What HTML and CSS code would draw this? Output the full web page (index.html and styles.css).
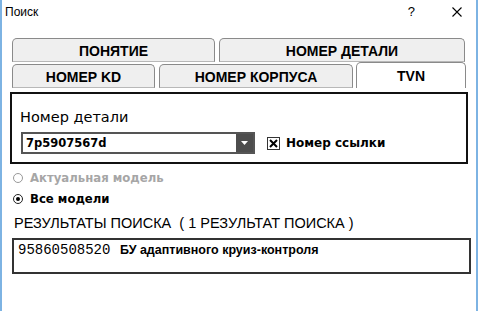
FILE: index.html
```html
<!DOCTYPE html>
<html lang="ru">
<head>
    <meta charset="UTF-8">
    <title>Поиск</title>
    <link rel="stylesheet" href="styles.css">
</head>
<body>
    <div class="window">
        <div class="titlebar">
            <span class="title">Поиск</span>
            <span class="help">?</span>
            <span class="close">
                <svg width="10" height="10" viewBox="0 0 10 10"><path d="M0.5 0.5 L9.5 9.5 M9.5 0.5 L0.5 9.5" stroke="#000" stroke-width="1.1"/></svg>
            </span>
        </div>

        <div class="content">
            <div class="tabs">
                <div class="tab-row">
                    <div class="tab t-concept">ПОНЯТИЕ</div>
                    <div class="tab t-part">НОМЕР ДЕТАЛИ</div>
                </div>
                <div class="tab-row">
                    <div class="tab t-kd">НОМЕР KD</div>
                    <div class="tab t-body">НОМЕР КОРПУСА</div>
                    <div class="tab t-tvn active">TVN</div>
                </div>
            </div>

            <div class="panel">
                <div class="label">Номер детали</div>
                <div class="field-row">
                    <div class="combo">
                        <span class="combo-value">7p5907567d</span>
                        <span class="combo-btn">
                            <svg width="7" height="4" viewBox="0 0 7 4"><path d="M0 0 H7 L3.5 4 Z" fill="#fff"/></svg>
                        </span>
                    </div>
                    <label class="check">
                        <span class="box">
                            <svg width="9" height="9" viewBox="0 0 9 9"><path d="M1 1 L8 8 M8 1 L1 8" stroke="#000" stroke-width="2"/></svg>
                        </span>
                        Номер ссылки
                    </label>
                </div>
            </div>

            <div class="radio disabled"><span class="dot"></span>Актуальная модель</div>
            <div class="radio"><span class="dot on"></span>Все модели</div>

            <div class="results-title">РЕЗУЛЬТАТЫ ПОИСКА&nbsp; ( 1 РЕЗУЛЬТАТ ПОИСКА )</div>
            <div class="results">
                <div class="result-line">
                    <span class="code">95860508520</span>
                    <span class="name">БУ адаптивного круиз-контроля</span>
                </div>
            </div>
        </div>
    </div>
</body>
</html>
```

FILE: styles.css
```css
body {
    margin: 0;
    background: #fff;
    font-family: "DejaVu Sans", Verdana, sans-serif;
    color: #000;
}

.window {
    width: 474px;
    height: 311px;
    border-left: 2px solid #7db3e3;
    border-right: 2px solid #7db3e3;
    background: #fff;
}

/* barra de titulo */
.titlebar {
    height: 30px;
    display: flex;
    align-items: center;
    padding-left: 3px;
    font-family: "Liberation Sans", Arial, sans-serif;
    font-size: 12px;
}

.title {
    flex: 1;
    margin-top: -7px;
}

.help {
    margin-top: -7px;
    margin-right: 37px;
    font-size: 13px;
}

.close {
    display: flex;
    margin-top: -7px;
    margin-right: 14px;
}

.content {
    padding: 8px 0 0 8px;
}

/* abas */
.tabs {
    display: flex;
    flex-direction: column;
    gap: 2px;
    padding-left: 2px;
}

.tab-row {
    display: flex;
    gap: 4px;
}

.tab {
    height: 24px;
    box-sizing: border-box;
    border: 1px solid #8a8a8a;
    border-bottom: 1px solid #b8b8b8;
    border-radius: 5px 5px 0 0;
    background: #efefef;
    font-family: "Liberation Sans", Arial, sans-serif;
    font-weight: bold;
    font-size: 14px;
    display: flex;
    justify-content: center;
    align-items: center;
    padding-top: 2px;
}

.t-concept { width: 203px; }
.t-part { width: 246px; }
.t-kd { width: 143px; }
.t-body { width: 194px; }
.t-tvn { width: 110px; margin-left: -1px; }

.tab.active {
    background: #fff;
    height: 26px;
    margin-top: -2px;
    border-bottom: none;
    align-items: flex-start;
    padding-top: 5px;
}

/* painel */
.panel {
    height: 68px;
    border: 2px solid #111;
    margin-top: 4px;
    padding: 0 0 0 8px;
    width: 446px;
}

.label {
    font-size: 14.5px;
    margin-top: 15px;
    height: 22px;
}

.field-row {
    display: flex;
    align-items: center;
    margin-top: 1px;
}

.combo {
    width: 230px;
    height: 18px;
    border: 2px solid #555;
    display: flex;
    align-items: center;
    justify-content: space-between;
    margin-left: 1px;
}

.combo-value {
    font-weight: bold;
    font-size: 11.5px;
    padding-left: 3px;
}

.combo-btn {
    width: 17px;
    height: 18px;
    background: #4d4d4d;
    display: flex;
    align-items: center;
    justify-content: center;
}

.check {
    display: flex;
    align-items: center;
    margin-left: 12px;
    font-weight: bold;
    font-size: 12px;
}

.box {
    width: 11px;
    height: 11px;
    border: 1px solid #333;
    display: flex;
    align-items: center;
    justify-content: center;
    margin-right: 6px;
}

/* opcoes */
.radio {
    display: flex;
    align-items: center;
    font-weight: bold;
    font-size: 11.7px;
    margin-left: 3px;
    height: 21px;
}

.radio.disabled {
    color: #a6a6a6;
    margin-top: 3px;
}

.dot {
    width: 8px;
    height: 8px;
    border: 1px solid #222;
    border-radius: 50%;
    margin-right: 7px;
    position: relative;
}

.radio.disabled .dot {
    border-color: #999;
}

.dot.on::after {
    content: "";
    position: absolute;
    left: 2px;
    top: 2px;
    width: 4px;
    height: 4px;
    border-radius: 50%;
    background: #000;
}

.results-title {
    font-family: "Liberation Sans", Arial, sans-serif;
    font-size: 14.5px;
    margin: 6px 0 0 4px;
    height: 18px;
}

.results {
    width: 455px;
    height: 32px;
    border: 2px solid #333;
    margin: 5px 0 0 2px;
}

.result-line {
    display: flex;
    align-items: baseline;
    padding: 2px 0 0 4px;
}

.code {
    font-family: "Liberation Mono", "Courier New", monospace;
    font-size: 14px;
    width: 102px;
}

.name {
    font-family: "Liberation Sans", Arial, sans-serif;
    font-weight: bold;
    font-size: 12.5px;
}
```
